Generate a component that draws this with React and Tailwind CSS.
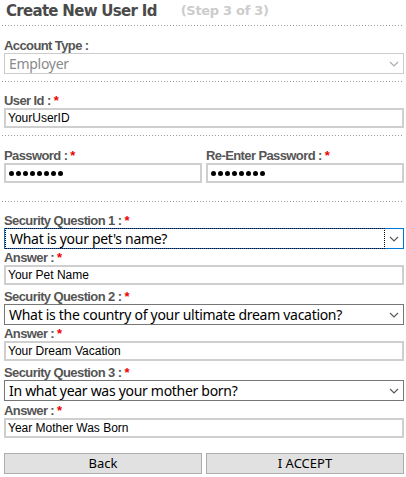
const ui = "font-['Noto_Sans','Open_Sans',sans-serif]";
const arial = "font-['Liberation_Sans',Arial,sans-serif]";

function Dots() {
  return <div className="-ml-[2px] h-px w-[402px] bg-[linear-gradient(to_right,#9a9a9a_1px,transparent_1px)] bg-[length:3px_1px]" />;
}

function Label({ children, req }) {
  return (
    <div className={`${arial} h-[14px] text-[13px] leading-[14px] font-bold tracking-[-0.6px] text-[#555]`}>
      {children}
      {req && <span className="ml-[3px] text-[#e00]">*</span>}
    </div>
  );
}

function Chevron({ color = '#777' }) {
  return (
    <svg width="10" height="6" viewBox="0 0 10 6" className="shrink-0">
      <path d="M1 1 L5 5 L9 1" fill="none" stroke={color} strokeWidth="1.1" />
    </svg>
  );
}

function Select({ value, focus, disabled }) {
  const border = focus ? 'border-[#0078d7]' : disabled ? 'border-[#cccccc]' : 'border-[#767676]';
  return (
    <div className={`flex h-[21px] w-[400px] items-center border ${border} bg-white ${ui}`}>
      <div className={`flex h-full flex-1 items-center pl-[4px] ${focus ? 'm-[1px] h-[17px] outline-1 outline-dotted outline-black' : ''}`}>
        <span className={`text-[14px] leading-none tracking-[-0.3px] ${disabled ? 'text-[#8a8a8a]' : 'text-black'}`}>{value}</span>
      </div>
      <div className="flex w-[18px] justify-center">
        <Chevron color={disabled ? '#aaa' : '#555'} />
      </div>
    </div>
  );
}

function Input({ value }) {
  return (
    <div className={`flex h-[20px] w-[400px] items-center border-2 border-[#cfcfcf] bg-white pl-[2px] ${arial} text-[12px] text-black`}>
      {value}
    </div>
  );
}

function Pass() {
  return (
    <div className="flex h-[20px] w-[198px] items-center gap-[2px] border-2 border-[#cfcfcf] bg-white pl-[3px]">
      {Array.from({ length: 8 }).map((_, i) => (
        <span key={i} className="h-[5px] w-[5px] rounded-full bg-black" />
      ))}
    </div>
  );
}

export default function App() {
  return (
    <div className="h-[477px] w-[406px] bg-white pl-[4px] pr-[2px]">
      <div className="flex h-[22px] items-center pl-[2px] font-['DejaVu_Sans',Verdana,sans-serif] font-bold">
        <span className="text-[15px] tracking-[-0.7px] text-[#4a4a4a]">Create New User Id</span>
        <span className="ml-[24px] text-[13px] tracking-[-0.3px] text-[#cccccc]">(Step 3 of 3)</span>
      </div>
      <div className="mt-[3px]"><Dots /></div>

      <div className="mt-[13px]"><Label>Account Type :</Label></div>
      <Select value="Employer" disabled />
      <div className="mt-[7px]"><Dots /></div>

      <div className="mt-[12px]"><Label req>User Id :</Label></div>
      <Input value="YourUserID" />
      <div className="mt-[7px]"><Dots /></div>

      <div className="mt-[13px] flex gap-[4px]">
        <div>
          <Label req>Password :</Label>
          <Pass />
        </div>
        <div>
          <Label req>Re-Enter Password :</Label>
          <Pass />
        </div>
      </div>
      <div className="mt-[18px]"><Dots /></div>

      <div className="mt-[12px]"><Label req>Security Question 1 :</Label></div>
      <Select value="What is your pet's name?" focus />
      <div className="mt-[2px]"><Label req>Answer :</Label></div>
      <Input value="Your Pet Name" />
      <div className="mt-[5px]"><Label req>Security Question 2 :</Label></div>
      <Select value="What is the country of your ultimate dream vacation?" />
      <div className="mt-[2px]"><Label req>Answer :</Label></div>
      <Input value="Your Dream Vacation" />
      <div className="mt-[5px]"><Label req>Security Question 3 :</Label></div>
      <Select value="In what year was your mother born?" />
      <div className="mt-[3px]"><Label req>Answer :</Label></div>
      <Input value="Year Mother Was Born" />

      <div className={`mt-[15px] flex gap-[4px] ${ui} text-[13px] text-black`}>
        <button className="h-[21px] w-[198px] border border-[#adadad] bg-[#e1e1e1]">Back</button>
        <button className="h-[21px] w-[198px] border border-[#adadad] bg-[#e1e1e1]">I ACCEPT</button>
      </div>
    </div>
  );
}
